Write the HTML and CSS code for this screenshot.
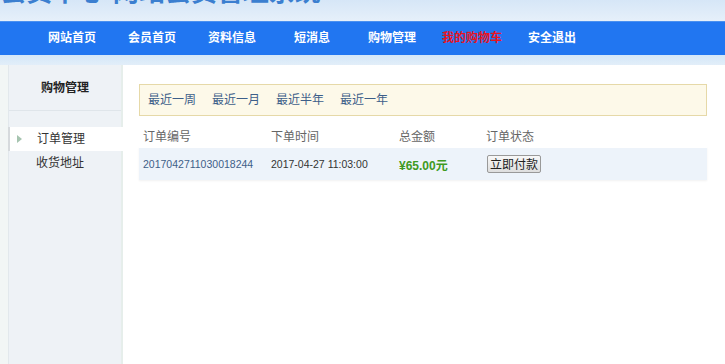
FILE: index.html
```html
<!DOCTYPE html>
<html lang="zh-CN">
<head>
    <meta charset="UTF-8"/>
    <title>购物管理 - 订单管理</title>
    <link rel="stylesheet" href="styles.css">
</head>
<body>
<div class="top">
    <h1 class="site-title">会员中心·网站会员管理系统</h1>
</div>
<div class="nav">
    <ul class="nav-list">
        <li><a href="#">网站首页</a></li>
        <li><a href="#">会员首页</a></li>
        <li><a href="#">资料信息</a></li>
        <li><a href="#">短消息</a></li>
        <li><a href="#">购物管理</a></li>
        <li><a href="#" class="nav-cart">我的购物车</a></li>
        <li><a href="#">安全退出</a></li>
    </ul>
</div>
<div class="band"></div>
<div class="wrap">
    <div class="side">
        <div class="side-title">购物管理</div>
        <ul class="side-menu">
            <li class="active"><a href="#">订单管理</a></li>
            <li><a href="#">收货地址</a></li>
        </ul>
    </div>
    <div class="main">
        <div class="filter">
            <a href="#">最近一周</a>
            <a href="#">最近一月</a>
            <a href="#">最近半年</a>
            <a href="#">最近一年</a>
        </div>
        <table class="orders">
            <tr class="orders-head">
                <td class="col-no">订单编号</td>
                <td class="col-time">下单时间</td>
                <td class="col-sum">总金额</td>
                <td>订单状态</td>
            </tr>
            <tr class="orders-row">
                <td class="order-no">2017042711030018244</td>
                <td class="order-time">2017-04-27 11:03:00</td>
                <td class="order-sum">¥65.00元</td>
                <td><button type="button" class="pay-btn">立即付款</button></td>
            </tr>
        </table>
    </div>
</div>
</body>
</html>
```

FILE: styles.css
```css
/* 页面基础 */
body {
    margin: 0;
    font-family: "Liberation Sans", "Noto Sans CJK SC", sans-serif;
    font-size: 12px;
    color: #333;
    background-color: #fff;
}

a {
    text-decoration: none;
}

ul {
    list-style: none;
    margin: 0;
    padding: 0;
}

/* 顶部标题（已滚动，只露出底部） */
.top {
    height: 21px;
    overflow: hidden;
    background: linear-gradient(#d6e6f7, #e6f0fa);
}

.site-title {
    margin: -26px 0 0 0;
    font-size: 26px;
    line-height: 36px;
    color: #3b7fd0;
    white-space: nowrap;
}

/* 主导航 */
.nav {
    height: 34px;
    background-color: #2176f1;
    border-top: 1px solid #4a90f0;
    box-sizing: border-box;
}

.nav-list {
    display: flex;
    padding-left: 32px;
}

.nav-list li {
    width: 80px;
    text-align: center;
    line-height: 33px;
}

.nav-list a {
    color: #fff;
    font-size: 12px;
    font-weight: bold;
}

.nav-list a.nav-cart {
    color: #e8141e;
}

.band {
    height: 10px;
    background: linear-gradient(#d4e7f8, #e2eef9);
}

/* 内容区 */
.wrap {
    display: flex;
    min-height: 299px;
    background: linear-gradient(90deg, #f2f6f5 0, #f2f6f5 8px, #fff 8px);
}

/* 左侧菜单 */
.side {
    width: 112px;
    margin-left: 8px;
    background-color: #eef2f6;
    border-left: 1px solid #e2e8ec;
    border-right: 2px solid #e6eeeb;
}

.side-title {
    height: 45px;
    line-height: 46px;
    text-align: center;
    font-size: 12px;
    font-weight: bold;
    color: #222;
    border-bottom: 1px solid #dfe5ea;
}

.side-menu {
    padding-top: 16px;
}

.side-menu li {
    height: 24px;
    line-height: 24px;
    padding-left: 27px;
    position: relative;
}

.side-menu a {
    color: #333;
    font-size: 12px;
}

.side-menu li.active {
    background-color: #fff;
    margin-left: -1px;
    margin-right: -2px;
    border-left: 2px solid #d6dadd;
}

/* 当前项小三角 */
.side-menu li.active::before {
    content: "";
    position: absolute;
    left: 7px;
    top: 8px;
    border-left: 5px solid #a6c4b0;
    border-top: 4px solid transparent;
    border-bottom: 4px solid transparent;
}

/* 右侧主体 */
.main {
    flex: 1;
    padding: 19px 18px 0 16px;
}

.filter {
    height: 30px;
    line-height: 30px;
    padding-left: 8px;
    background-color: #fdf9e9;
    border: 1px solid #e6d9a8;
    display: flex;
    gap: 16px;
}

.filter a {
    color: #3d5f8a;
}

/* 订单表格 */
.orders {
    width: 100%;
    margin-top: 8px;
    border-collapse: collapse;
}

.orders td {
    padding: 0 0 0 4px;
    text-align: left;
}

.orders-head td {
    height: 22px;
    color: #666;
}

.orders-row {
    background-color: #edf3fa;
    box-shadow: 0 1px 2px rgba(0, 0, 0, 0.06);
}

.orders-row td {
    height: 32px;
    border-top: 2px solid #fff;
}

.col-no, .col-time {
    width: 124px;
}

.col-sum {
    width: 83px;
}

.order-no, .order-time {
    font-size: 10.5px;
}

.order-no {
    color: #3e6088;
}

.order-time {
    color: #333;
}

.order-sum {
    color: #3e9a22;
    font-weight: bold;
}

.pay-btn {
    font-family: "Noto Sans CJK SC", sans-serif;
    font-size: 12px;
    line-height: 14px;
    height: 18px;
    padding: 0 2px;
    margin-left: 1px;
    color: #222;
    border: 1px solid #999;
    border-radius: 2px;
    background: linear-gradient(#f8f8f8, #dedede);
}
```
